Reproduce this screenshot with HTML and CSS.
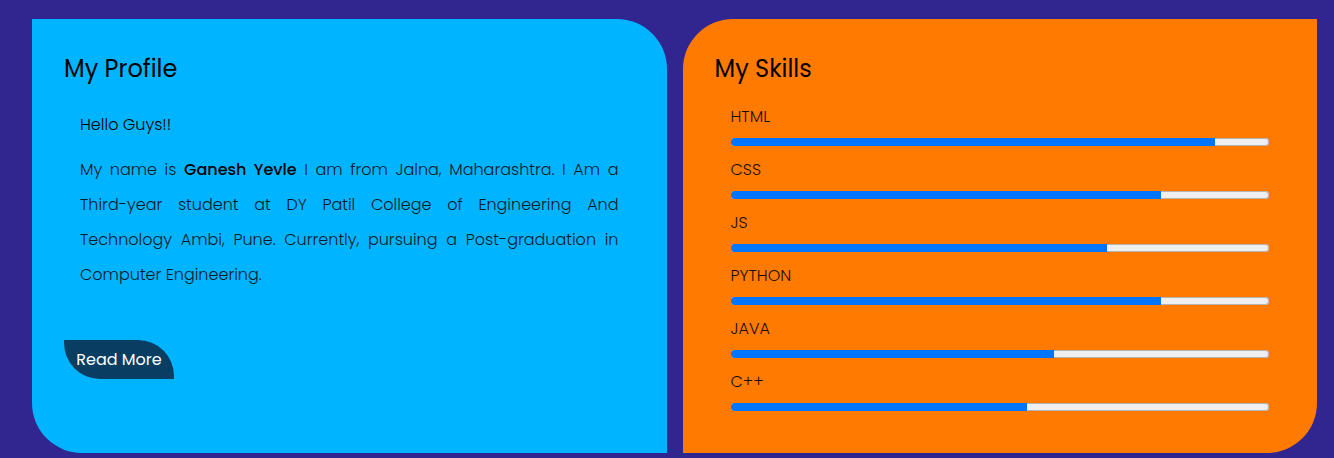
FILE: index.html
```html
<!DOCTYPE html>
<html lang="en">
<head>
<meta charset="utf-8">
<title>Profile</title>
<link rel="stylesheet" href="styles.css">
</head>
<body>
<main class="wrap">
  <section class="card profile">
    <h2 class="card-title">My Profile</h2>
    <p class="hello">Hello Guys!!</p>
    <p class="bio">
      <span class="line">My name is <strong>Ganesh Yevle</strong> I am from Jalna, Maharashtra. I Am a</span>
      <span class="line">Third-year student at DY Patil College of Engineering And</span>
      <span class="line">Technology Ambi, Pune. Currently, pursuing a Post-graduation in</span>
      <span class="last">Computer Engineering.</span>
    </p>
    <a class="btn" href="#">Read More</a>
  </section>
  <section class="card skills">
    <h2 class="card-title">My Skills</h2>
    <ul class="skill-list">
      <li class="skill"><span class="label">HTML</span><div class="track"><div class="fill" style="width:90%"></div></div></li>
      <li class="skill"><span class="label">CSS</span><div class="track"><div class="fill" style="width:80%"></div></div></li>
      <li class="skill"><span class="label">JS</span><div class="track"><div class="fill" style="width:70%"></div></div></li>
      <li class="skill"><span class="label">PYTHON</span><div class="track"><div class="fill" style="width:80%"></div></div></li>
      <li class="skill"><span class="label">JAVA</span><div class="track"><div class="fill" style="width:60%"></div></div></li>
      <li class="skill"><span class="label">C++</span><div class="track"><div class="fill" style="width:55%"></div></div></li>
    </ul>
  </section>
</main>
</body>
</html>
```
FILE: styles.css
```css
* { box-sizing: border-box; }
html, body { margin: 0; padding: 0; }
body {
  background: #31258f;
  font-family: "Poppins", "Open Sans", "Noto Sans", sans-serif;
  color: #000;
}
.wrap {
  display: grid;
  grid-template-columns: 1fr 1fr;
  gap: 16px;
  padding: 19px 17px 0 32px;
}
.card {
  height: 434px;
  padding: 32px 32px 0 32px;
}
.profile {
  background: #00b4ff;
  border-radius: 0 50px 0 50px;
}
.skills {
  background: #ff7a00;
  border-radius: 50px 0 50px 0;
}
.card-title {
  margin: 0;
  font-size: 24px;
  line-height: 36px;
  font-weight: 400;
}
.hello {
  margin: 26px 0 0;
  padding: 0 16px;
  font-size: 16px;
  line-height: 24px;
  font-weight: 300;
}
.bio {
  margin: 15px 0 0;
  padding: 0 16px;
  font-size: 16px;
  line-height: 35px;
  font-weight: 300;
  color: #0b1a2a;
}
.bio strong { font-weight: 500; color: #000; }
.bio .line {
  display: block;
  text-align: justify;
  text-align-last: justify;
}
.bio .last { display: block; }
.btn {
  display: inline-flex;
  align-items: center;
  justify-content: center;
  margin-top: 48px;
  width: 110px;
  height: 39px;
  background: #0a3d62;
  color: #fff;
  text-decoration: none;
  font-size: 16px;
  font-weight: 400;
  border-radius: 0 36px 0 36px;
}
.skill-list {
  list-style: none;
  margin: 17px 0 0;
  padding: 0 16px;
}
.skill { margin-bottom: 11px; }
.label {
  display: block;
  font-size: 16px;
  line-height: 26px;
  font-weight: 300;
  color: #1a0d00;
}
.track {
  margin-top: 8px;
  height: 8px;
  border-radius: 4px;
  background: #efefef;
  box-shadow: inset 0 0 0 1px #b4b4b4;
  overflow: hidden;
}
.fill {
  height: 100%;
  background: #0075ff;
}
```
